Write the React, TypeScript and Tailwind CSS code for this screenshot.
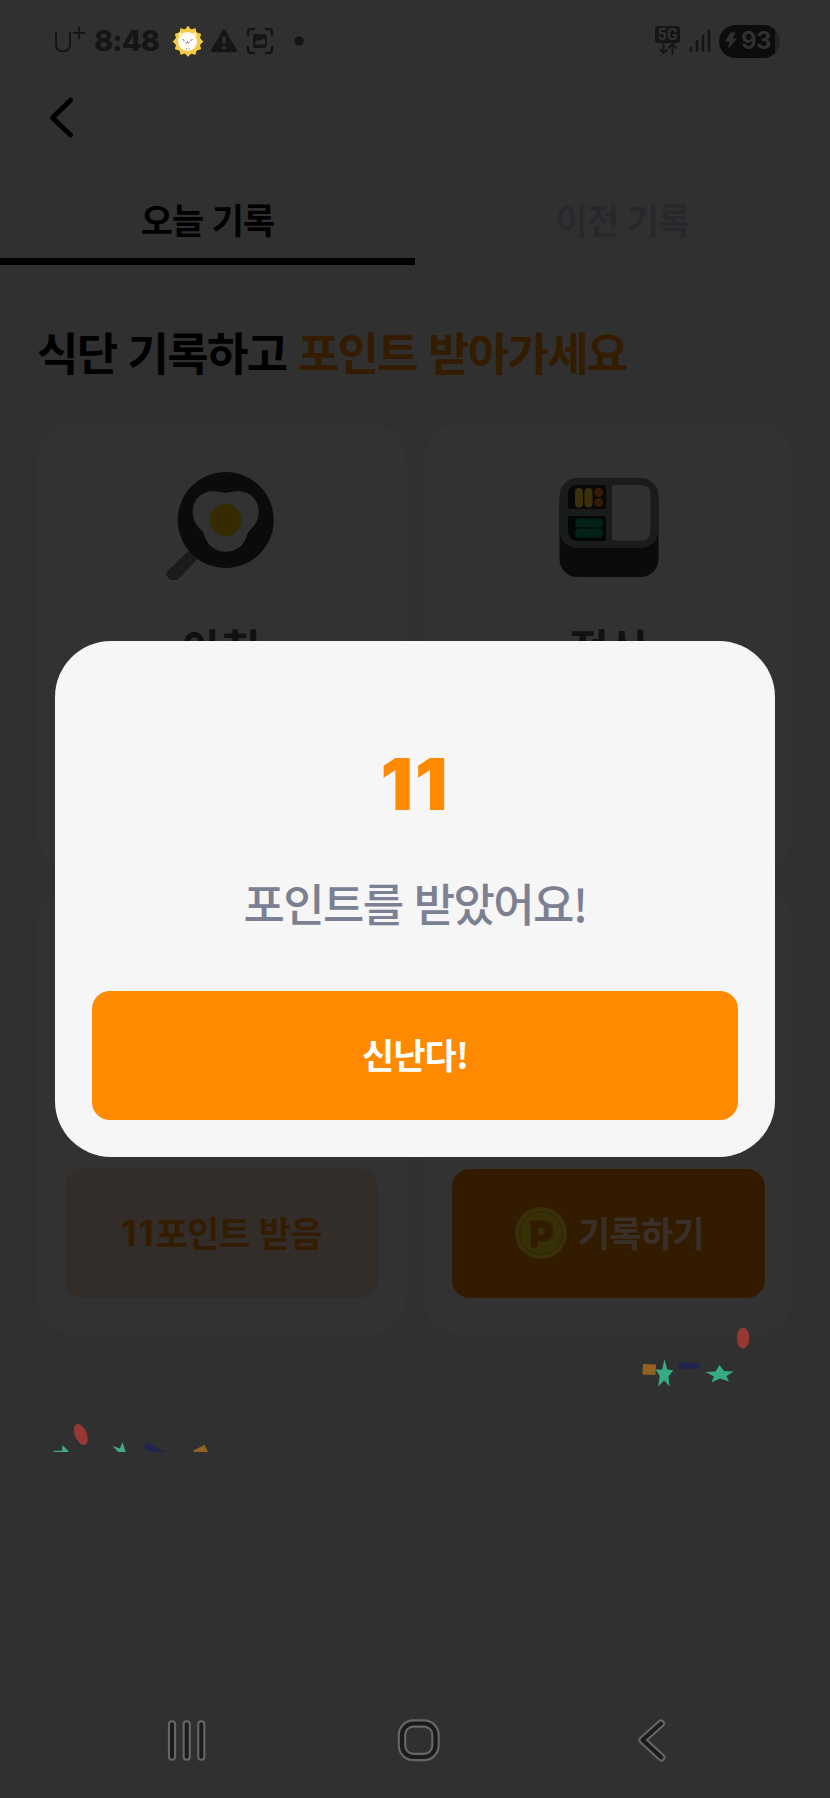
import type { ReactNode } from "react";

const KR = "font-['Noto_Sans_CJK_KR','Noto_Sans',sans-serif]";

function StatusBar() {
  return (
    <header className="flex h-[82px] items-center text-[#151515]">
      <svg className="ml-[50px] h-[34px] w-[40px] shrink-0" viewBox="50 24 40 34" fill="none" stroke="currentColor" strokeWidth="2">
        <path d="M56 32v12c0 5 2.400 7.300 7 7.300s7-2.300 7-7.300V32" />
        <path d="M79 27v12M73 33h12" />
      </svg>
      <span className="ml-[4px] w-[68px] shrink-0 whitespace-nowrap font-[Inter,sans-serif] text-[29px] leading-[34px] font-extrabold tracking-[-0.900px]">8:48</span>
      <svg className="ml-[8px] h-[36px] w-[140px] shrink-0" viewBox="170 23 140 36">
        <path d="M188 25l3 3.800 4.800-1.300 1.200 4.500 4.800 1.400-1.200 4.600 3.200 3.500-3.200 3.500 1.200 4.600-4.800 1.400-1.200 4.500-4.800-1.300-3 3.300-3-3.300-4.800 1.300-1.200-4.500-4.800-1.400 1.200-4.600-3.200-3.500 3.200-3.500-1.200-4.600 4.800-1.400 1.200-4.500 4.800 1.300z" fill="#f2cb4a" stroke="#282514" />
        <circle cx="187.500" cy="41.500" r="9.500" fill="#fffdf5" />
        <circle cx="180.500" cy="34.500" r="2" fill="#fff2c2" />
        <circle cx="194.500" cy="34.500" r="2" fill="#fff2c2" />
        <path d="M182.500 39.500l2 1m8-1l-2 1M185.300 42.500q1.100 1.200 2.200 0q1.100 1.200 2.200 0M187.500 41v1M186 48.700h1m1.500 0h1" fill="none" stroke="#55524c" strokeWidth=".8" />
        <path d="M224 30.500l12 20.500h-24z" fill="#151515" stroke="#151515" strokeWidth="2.500" strokeLinejoin="round" />
        <path d="M224 36.500v7M224 46v3" stroke="#303030" strokeWidth="3.400" />
        <path d="M248 35v-3q0-3 3-3h3m12 0h3q3 0 3 3v3m0 12v3q0 3-3 3h-3m-12 0h-3q-3 0-3-3v-3" fill="none" stroke="#151515" strokeWidth="2.500" strokeLinecap="round" />
        <rect x="253" y="34" width="14" height="14" rx="3" fill="#151515" />
        <path d="M255 44.500v-2l3-3 2 1.500 3.500-3 1.800 2.500v4z" fill="#303030" />
        <circle cx="299" cy="41" r="4.700" fill="#151515" />
      </svg>
      <div className="ml-auto flex flex-col items-center">
        <span className="mt-[-1px] flex h-[17px] w-[25px] items-center justify-center rounded-[3px] bg-[#151515] font-[Roboto,sans-serif] text-[16px] leading-none font-bold text-[#303030]">5G</span>
        <svg className="h-[12px] w-[20px]" viewBox="0 0 20 12" fill="none" stroke="currentColor" strokeWidth="1.800">
          <path d="M5.500 0v10M1.500 6l4 4.300 4-4.300M14.500 11.500V1M10.500 5.300l4-4.300 4 4.300" />
        </svg>
      </div>
      <svg className="ml-[8px] h-[26px] w-[23px]" viewBox="688 28 23 26" stroke="currentColor" strokeWidth="2.600" strokeLinecap="round">
        <path d="M691 48v2.500M697 41.500v9M703 36v14.500M709 30.500v20" />
      </svg>
      <div className="mr-[50px] ml-[8px] flex h-[33px] w-[61px] items-center rounded-full bg-[linear-gradient(90deg,#0c0c0c_56px,#232323_56px)] pl-[6px]">
        <svg className="h-[18px] w-[12px]" viewBox="0 0 12 18" fill="#303030"><path d="M5.500.5h5L7.800 6.500H12L2.500 17.500 4.800 9.500H.2z" /></svg>
        <span className="ml-[4px] font-[Inter,sans-serif] text-[24px] leading-none font-bold tracking-[-0.700px] text-[#303030]">93</span>
      </div>
    </header>
  );
}

function PanIcon() {
  return (
    <svg className="h-[120px] w-[120px]" viewBox="161 460 120 120">
      <path d="M189 550l-21.500 20.500q-3 3 0 6l3.500 3.500q3 2.500 6 0l22-23z" transform="translate(0 .5)" fill="#1b1b1b" />
      <circle cx="225.700" cy="520" r="48" fill="#0b0b0b" />
      <path d="M225.700 492.700c3 0 6-1.500 13-1.500c11 0 20 8.500 20 20c0 8-3 13.500-7.500 17.500c-5 4.500-3.500 8-8 14.500c-4 5.500-10 8.500-17.500 8.500s-13.500-3-17.500-8.500c-4.500-6.500-3-10-8-14.500c-4.500-4-7.500-9.500-7.500-17.500c0-11.500 9-20 20-20c7 0 10 1.500 13 1.500z" fill="#323232" />
      <circle cx="225.700" cy="520" r="16" fill="#352b00" />
    </svg>
  );
}

function BentoIcon() {
  return (
    <svg className="h-[120px] w-[120px]" viewBox="548.500 460 120 120">
      <rect x="559" y="484" width="99" height="93" rx="18" fill="#0b0b0b" />
      <rect x="559" y="478" width="99" height="70" rx="18" fill="#1a1b1b" />
      <path d="M576 485h27q2.500 0 2.500 2.500v19q0 2.500-2.500 2.500h-33q-2.500 0-2.500-2.500v-12q0-9.500 8.500-9.500z" fill="#0a0804" />
      <path d="M570 516h33q2.500 0 2.500 2.500v20q0 2.500-2.500 2.500h-25q-10.500 0-10.500-10v-12.500q0-2.500 2.500-2.500z" fill="#030807" />
      <path d="M613.500 485H640q10 0 10 10v35.500q0 10-10 10h-26.500q-2 0-2-2v-51.500q0-2 2-2z" fill="#303131" />
      <rect x="574.500" y="488" width="8" height="19.500" rx="4" fill="#3a310c" />
      <rect x="584" y="488" width="8" height="19.500" rx="4" fill="#3a310c" />
      <circle cx="598.200" cy="492.500" r="4.500" fill="#361b08" />
      <circle cx="598.200" cy="502.500" r="4.500" fill="#361b08" />
      <rect x="574.500" y="518.500" width="28.500" height="9" rx="4.500" fill="#032019" />
      <rect x="574.500" y="528.500" width="28.500" height="9" rx="4.500" fill="#032019" />
    </svg>
  );
}

function Card({ children }: { children?: ReactNode }) {
  return <div className="flex h-[447.500px] flex-col items-center rounded-[37px] bg-[#323232] px-[28px]">{children}</div>;
}

function Coin() {
  return (
    <svg className="h-[52px] w-[52px]" viewBox="0 0 52 52">
      <circle cx="26" cy="26" r="26" fill="#39300b" />
      <circle cx="26" cy="26" r="21.500" fill="#373006" stroke="#2c2605" />
      <path fillRule="evenodd" d="M15 13.500h13q10 0 10 10.500t-10 10.500h-5v5q0 1-1 1h-5q-1 0-1-1v-19l-1-1zM23 20.500v7h4q3 0 3-3.500t-3-3.500z" fill="#331b00" />
    </svg>
  );
}

function Confetti() {
  return (
    <>
      <svg className="absolute top-[1320px] left-[630px] h-[80px] w-[130px]" viewBox="630 1320 130 80">
        <ellipse cx="743" cy="1338" rx="6.200" ry="10.500" fill="#973832" />
        <path d="M643 1364l13 .5-.5 10.500-13-.5z" fill="#936220" />
        <path d="M664.500 1359l2.800 10.500 6 .7-4.800 6.300 1 10-5.300-6-6 6 1.500-10.500-4.200-6.500 6.500.3z" fill="#36aa80" />
        <path d="M678.500 1363l21-.5v6l-21 .5z" fill="#22224f" />
        <path d="M719.500 1365l4.500 6 10 .5-7.500 4.500 2.500 5.500-9-3-8.500 4 2.500-6-8.500-4.500 10-.5z" fill="#36aa80" />
      </svg>
      <svg className="absolute top-[1420px] left-[50px] h-[32px] w-[165px]" viewBox="50 1420 165 32">
        <ellipse cx="80.800" cy="1434.500" rx="6" ry="11" transform="rotate(-23 80.800 1434.500)" fill="#973832" />
        <path d="M53.500 1452l.5-1.200h8l.5-5.800 6.500 7z" fill="#45aa84" />
        <path d="M112.500 1445.800l7.500 2.700 2.500-6.500 3.200 10h-7.500z" fill="#45aa84" />
        <path d="M146 1442.500l19 9.500h-13.500l-8-4z" fill="#22224f" />
        <path d="M193.500 1450.500l11-5.700 3.500 7.200h-14z" fill="#936220" />
      </svg>
    </>
  );
}

function NavBar() {
  return (
    <nav className="mt-auto flex h-[116px] items-center pl-[166px]">
      <svg className="h-[44px] w-[42px]" viewBox="166 1718 42 44" strokeLinecap="round">
        <path d="M172 1724.300v32.400M186.700 1724.300v32.400M201.300 1724.300v32.400" stroke="#666" strokeWidth="8.200" />
        <path d="M172 1724.300v32.400M186.700 1724.300v32.400M201.300 1724.300v32.400" stroke="#1b1b1b" strokeWidth="4" />
      </svg>
      <svg className="ml-[188px] h-[46px] w-[46px]" viewBox="396 1717 46 46" fill="none">
        <rect x="402" y="1723.500" width="33.500" height="33.500" rx="11.500" stroke="#666" strokeWidth="8.500" />
        <rect x="402" y="1723.500" width="33.500" height="33.500" rx="11.500" stroke="#1b1b1b" strokeWidth="4.200" />
      </svg>
      <svg className="ml-[194px] h-[46px] w-[34px]" viewBox="636 1717 34 46" fill="none" strokeLinecap="round" strokeLinejoin="round">
        <path d="M661 1723.500l-18.500 16.500 19 17.500" stroke="#666" strokeWidth="8" />
        <path d="M661 1723.500l-18.500 16.500 19 17.500" stroke="#1b1b1b" strokeWidth="4" />
      </svg>
    </nav>
  );
}

export default function App() {
  return (
    <div className={`relative flex h-[1798px] w-[830px] flex-col overflow-hidden bg-[#303030] ${KR}`}>
      <StatusBar />
      <div className="flex h-[80px] items-start pt-[13px] pl-[46px]">
        <svg className="h-[46px] w-[30px]" viewBox="46 95 30 46" fill="none" stroke="#000" strokeWidth="5" strokeLinecap="round" strokeLinejoin="round">
          <path d="M70.500 100.200L52.500 117.700l18 17.300" />
        </svg>
      </div>
      <div className="grid h-[103px] grid-cols-2 text-center text-[35px] leading-[50px] font-bold tracking-[-0.900px] [word-spacing:1.500px]">
        <div className="border-b-[7px] border-black pt-[32px]">오늘 기록</div>
        <div className="pt-[32px] text-[#28282c]">이전 기록</div>
      </div>
      <h1 className="mt-[54px] ml-[37px] h-[103px] text-[45px] leading-[66px] font-bold tracking-[-1.650px] whitespace-nowrap [word-spacing:2.500px]">
        식단 기록하고 <span className="text-[#331c00]">포인트 받아가세요</span>
      </h1>
      <main className="grid grid-cols-2 gap-[18px] px-[37px]">
        <Card>
          <div className="mt-[38px] mr-[2px]"><PanIcon /></div>
          <div className="mt-[38px] mr-[2px] text-[44px] leading-[60px] font-bold tracking-[-1.500px] text-[#111114]">아침</div>
        </Card>
        <Card>
          <div className="mt-[38px]"><BentoIcon /></div>
          <div className="mt-[38px] mr-[2px] text-[44px] leading-[60px] font-bold tracking-[-1.500px] text-[#111114]">점심</div>
        </Card>
        <Card>
          <button className="mt-auto mb-[37.500px] flex h-[129px] w-full items-center justify-center rounded-[18px] bg-[#332d29] text-[35px] font-bold tracking-[-0.800px] text-[#331c00] [word-spacing:2px]">
            <span className="font-[Inter,sans-serif] tracking-[2px]">11</span>
            <span className="-mt-[2px]">포인트 받음</span>
          </button>
        </Card>
        <Card>
          <button className="mt-auto mb-[37.500px] flex h-[129px] w-full items-center justify-center gap-[11px] rounded-[18px] bg-[#331b00] pl-[2px] text-[35px] font-bold tracking-[-0.700px] text-[#3a3029]">
            <Coin />
            <span className="-mt-px">기록하기</span>
          </button>
        </Card>
      </main>
      <NavBar />
      <Confetti />
      <section role="dialog" className="absolute top-[641px] left-[55px] flex h-[515.500px] w-[720px] flex-col items-center rounded-[56px] bg-[#f6f6f6] px-[37px]">
        <div className="mt-[99px] font-[Inter,sans-serif] text-[72px] leading-[88px] font-black tracking-[2px] text-[#ff8a00]">11</div>
        <div className="mt-[42px] text-[45px] leading-[66px] font-medium tracking-[-1.700px] text-[#7b8092] [word-spacing:3px]">포인트를 받았어요!</div>
        <button className="mt-auto mb-[36.500px] h-[129px] w-full rounded-[18px] bg-[#ff8a00] pb-[3px] text-[35px] font-bold tracking-[-0.900px] text-white">신난다!</button>
      </section>
    </div>
  );
}
